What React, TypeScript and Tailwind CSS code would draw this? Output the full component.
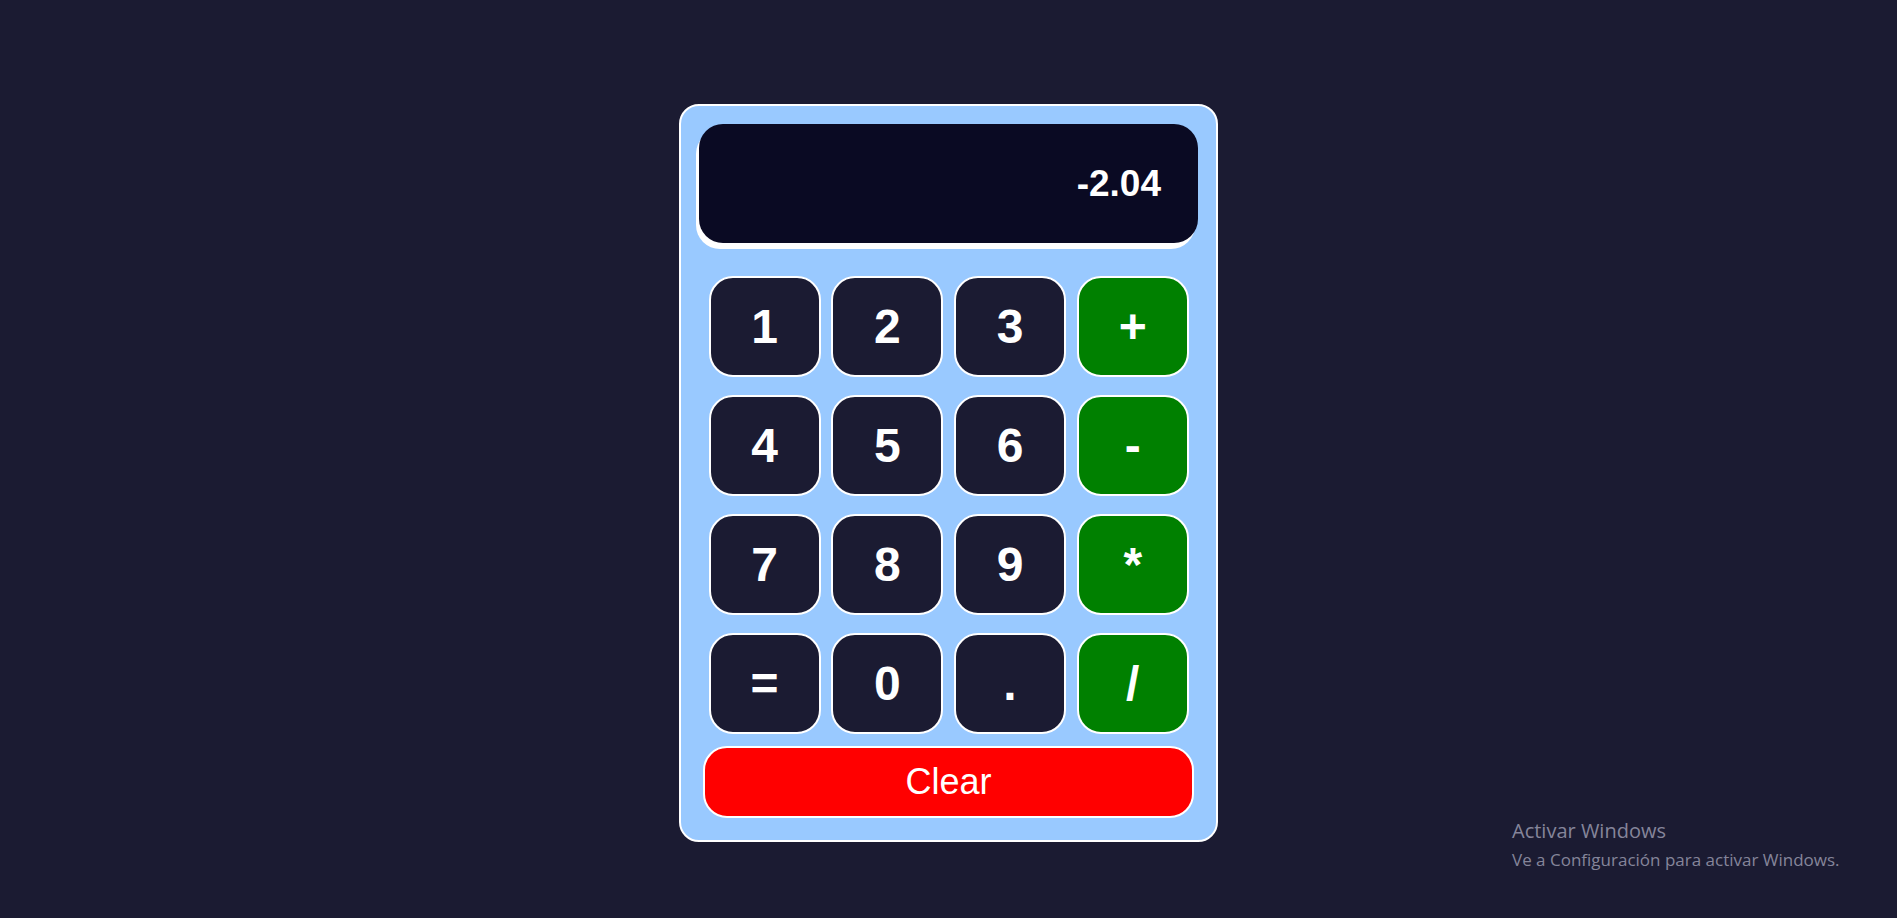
const keys = [
  { label: '1' }, { label: '2' }, { label: '3' }, { label: '+', op: true },
  { label: '4' }, { label: '5' }, { label: '6' }, { label: '-', op: true },
  { label: '7' }, { label: '8' }, { label: '9' }, { label: '*', op: true },
  { label: '=' }, { label: '0' }, { label: '.' }, { label: '/', op: true },
];

export default function App() {
  return (
    <div className="relative min-h-screen w-full bg-[#1b1b32] font-['Liberation_Sans',Arial,sans-serif]">
      <div className="flex justify-center pt-[104px]">
        {/* Calculator body */}
        <div className="w-[539px] rounded-[20px] border-2 border-white bg-[#99c9ff] px-[18px] pt-[18px] pb-[22px]">
          {/* Display */}
          <div className="flex h-[119px] w-full items-center justify-end rounded-[24px] bg-[#0a0a23] pr-[37px] shadow-[-3px_6px_0_white]">
            <span className="text-[37px] font-bold text-white">-2.04</span>
          </div>

          {/* Keypad */}
          <div className="mx-auto mt-[33px] grid w-[480px] grid-cols-4 gap-x-[11px] gap-y-[18px]">
            {keys.map((k) => (
              <button
                key={k.label}
                className={`flex h-[101px] w-[112px] items-center justify-center rounded-[24px] border-2 border-white text-[48px] font-bold text-white ${
                  k.op ? 'bg-[#008000]' : 'bg-[#1b1b32]'
                }`}
              >
                {k.label}
              </button>
            ))}
          </div>

          <button className="mx-[4px] mt-[12px] flex h-[72px] w-[491px] items-center justify-center rounded-[24px] border-2 border-white bg-[#ff0000] text-[36px] text-white">
            Clear
          </button>
        </div>
      </div>

      {/* Windows watermark */}
      <div className="pointer-events-none absolute left-[1512px] top-[816px] font-['Open_Sans',sans-serif] text-[#85859a]">
        <div className="text-[20px] leading-[30px]">Activar Windows</div>
        <div className="mt-[2px] text-[17px] leading-[24px]">Ve a Configuración para activar Windows.</div>
      </div>
    </div>
  );
}
